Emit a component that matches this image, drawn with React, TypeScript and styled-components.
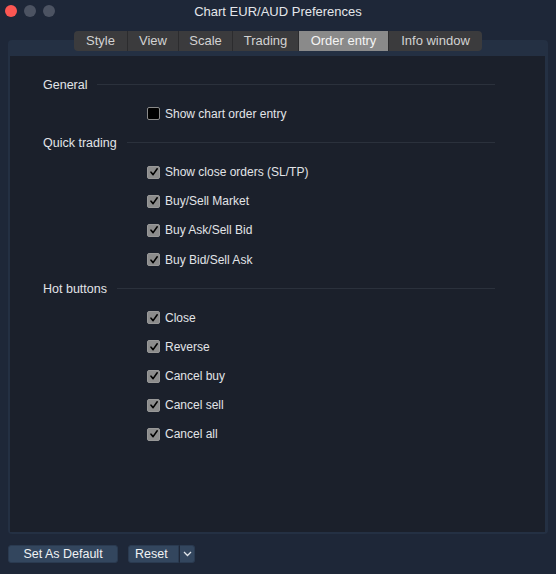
import React from "react";
import styled, { createGlobalStyle } from "styled-components";

const Global = createGlobalStyle`
  html, body { margin: 0; padding: 0; background: #1e2738; }
  body { font-family: "Liberation Sans", Arial, sans-serif; -webkit-font-smoothing: antialiased; }
`;

const Window = styled.div`
  width: 556px;
  height: 574px;
  background: #1e2738;
  display: flex;
  flex-direction: column;
  overflow: hidden;
`;

const TitleBar = styled.div`
  height: 22px;
  display: grid;
  grid-template-columns: 80px 1fr 80px;
  align-items: center;
`;

const Lights = styled.div`
  display: flex;
  gap: 7px;
  padding-left: 5px;
`;

const Light = styled.span<{ $c: string }>`
  width: 12px;
  height: 12px;
  border-radius: 50%;
  background: ${(p) => p.$c};
`;

const Title = styled.div`
  text-align: center;
  color: #e4e6ea;
  font-size: 13px;
`;

const TabRow = styled.div`
  margin-top: 9px;
  display: flex;
  justify-content: center;
  position: relative;
  z-index: 1;
`;

const Tab = styled.div<{ $active?: boolean; $w: number }>`
  width: ${(p) => p.$w}px;
  box-sizing: border-box;
  height: 20px;
  line-height: 20px;
  text-align: center;
  font-size: 13px;
  color: ${(p) => (p.$active ? "#f4f4f4" : "#d2d2d2")};
  background: ${(p) => (p.$active ? "#8a8a8a" : "#3b3b3d")};
  border-left: 1px solid #2c2c2e;
  &:first-child { border-left: none; border-radius: 4px 0 0 4px; }
  &:last-child { border-radius: 0 4px 4px 0; }
`;

const Frame = styled.div`
  margin: -11px 8px 0 8px;
  padding: 16px 3px 2px 2px;
  background: #243043;
  border-radius: 4px;
  height: 494px;
  box-sizing: border-box;
  display: flex;
`;

const Panel = styled.div`
  flex: 1;
  background: #1b202b;
  padding: 14px 50px 0 33px;
  display: flex;
  flex-direction: column;
`;

const Heading = styled.div`
  height: 29.17px;
  display: flex;
  align-items: center;
  gap: 10px;
  color: #e2e4e8;
  font-size: 12.5px;
  &::after {
    content: "";
    flex: 1;
    height: 1px;
    background: #2b313c;
  }
`;

const Row = styled.label`
  height: 29.17px;
  display: flex;
  align-items: center;
  gap: 5px;
  padding-left: 104px;
  color: #e2e4e8;
  font-size: 12px;
`;

const Box = styled.span<{ $on: boolean }>`
  width: 13px;
  height: 13px;
  box-sizing: border-box;
  border-radius: 2px;
  display: flex;
  align-items: center;
  justify-content: center;
  background: ${(p) => (p.$on ? "#8c8c8c" : "#000")};
  border: 1px solid ${(p) => (p.$on ? "#989898" : "#8a8a8a")};
`;

const Footer = styled.div`
  margin-top: 11px;
  padding-left: 8px;
  display: flex;
  gap: 10px;
`;

const Button = styled.div`
  height: 18px;
  box-sizing: border-box;
  background: #33465e;
  border: 1px solid #2a3a50;
  border-radius: 3px;
  color: #f0f2f4;
  font-size: 12.5px;
  display: flex;
  align-items: center;
  justify-content: center;
`;

const DefaultButton = styled(Button)`
  width: 110px;
`;

const Split = styled.div`
  display: flex;
`;

const ResetButton = styled(Button)`
  width: 51px;
  border-radius: 3px 0 0 3px;
  justify-content: flex-start;
  padding-left: 6px;
`;

const ArrowButton = styled(Button)`
  width: 16px;
  border-radius: 0 3px 3px 0;
  border-left: 1px solid #1e2738;
`;

const Check = () => (
  <svg width="10" height="10" viewBox="0 0 10 10">
    <path d="M2 5.2 L4.1 7.6 L8.2 1.8" fill="none" stroke="#000" strokeWidth="1.6" strokeLinecap="round" strokeLinejoin="round" />
  </svg>
);

const Item = ({ label, on = true }: { label: string; on?: boolean }) => (
  <Row>
    <Box $on={on}>{on && <Check />}</Box>
    {label}
  </Row>
);

const tabs: [string, number][] = [
  ["Style", 53],
  ["View", 51],
  ["Scale", 54],
  ["Trading", 66],
  ["Order entry", 90],
  ["Info window", 94],
];

export default function App() {
  return (
    <Window>
      <Global />
      <TitleBar>
        <Lights>
          <Light $c="#fc5753" />
          <Light $c="#4c5362" />
          <Light $c="#4c5362" />
        </Lights>
        <Title>Chart EUR/AUD Preferences</Title>
        <div />
      </TitleBar>
      <TabRow>
        {tabs.map(([t, w]) => (
          <Tab key={t} $active={t === "Order entry"} $w={w}>
            {t}
          </Tab>
        ))}
      </TabRow>
      <Frame>
        <Panel>
          <Heading>General</Heading>
          <Item label="Show chart order entry" on={false} />
          <Heading>Quick trading</Heading>
          <Item label="Show close orders (SL/TP)" />
          <Item label="Buy/Sell Market" />
          <Item label="Buy Ask/Sell Bid" />
          <Item label="Buy Bid/Sell Ask" />
          <Heading>Hot buttons</Heading>
          <Item label="Close" />
          <Item label="Reverse" />
          <Item label="Cancel buy" />
          <Item label="Cancel sell" />
          <Item label="Cancel all" />
        </Panel>
      </Frame>
      <Footer>
        <DefaultButton>Set As Default</DefaultButton>
        <Split>
          <ResetButton>Reset</ResetButton>
          <ArrowButton>
            <svg width="9" height="6" viewBox="0 0 9 6">
              <path d="M1 1 L4.5 4.5 L8 1" fill="none" stroke="#e0e4ea" strokeWidth="1.3" />
            </svg>
          </ArrowButton>
        </Split>
      </Footer>
    </Window>
  );
}
